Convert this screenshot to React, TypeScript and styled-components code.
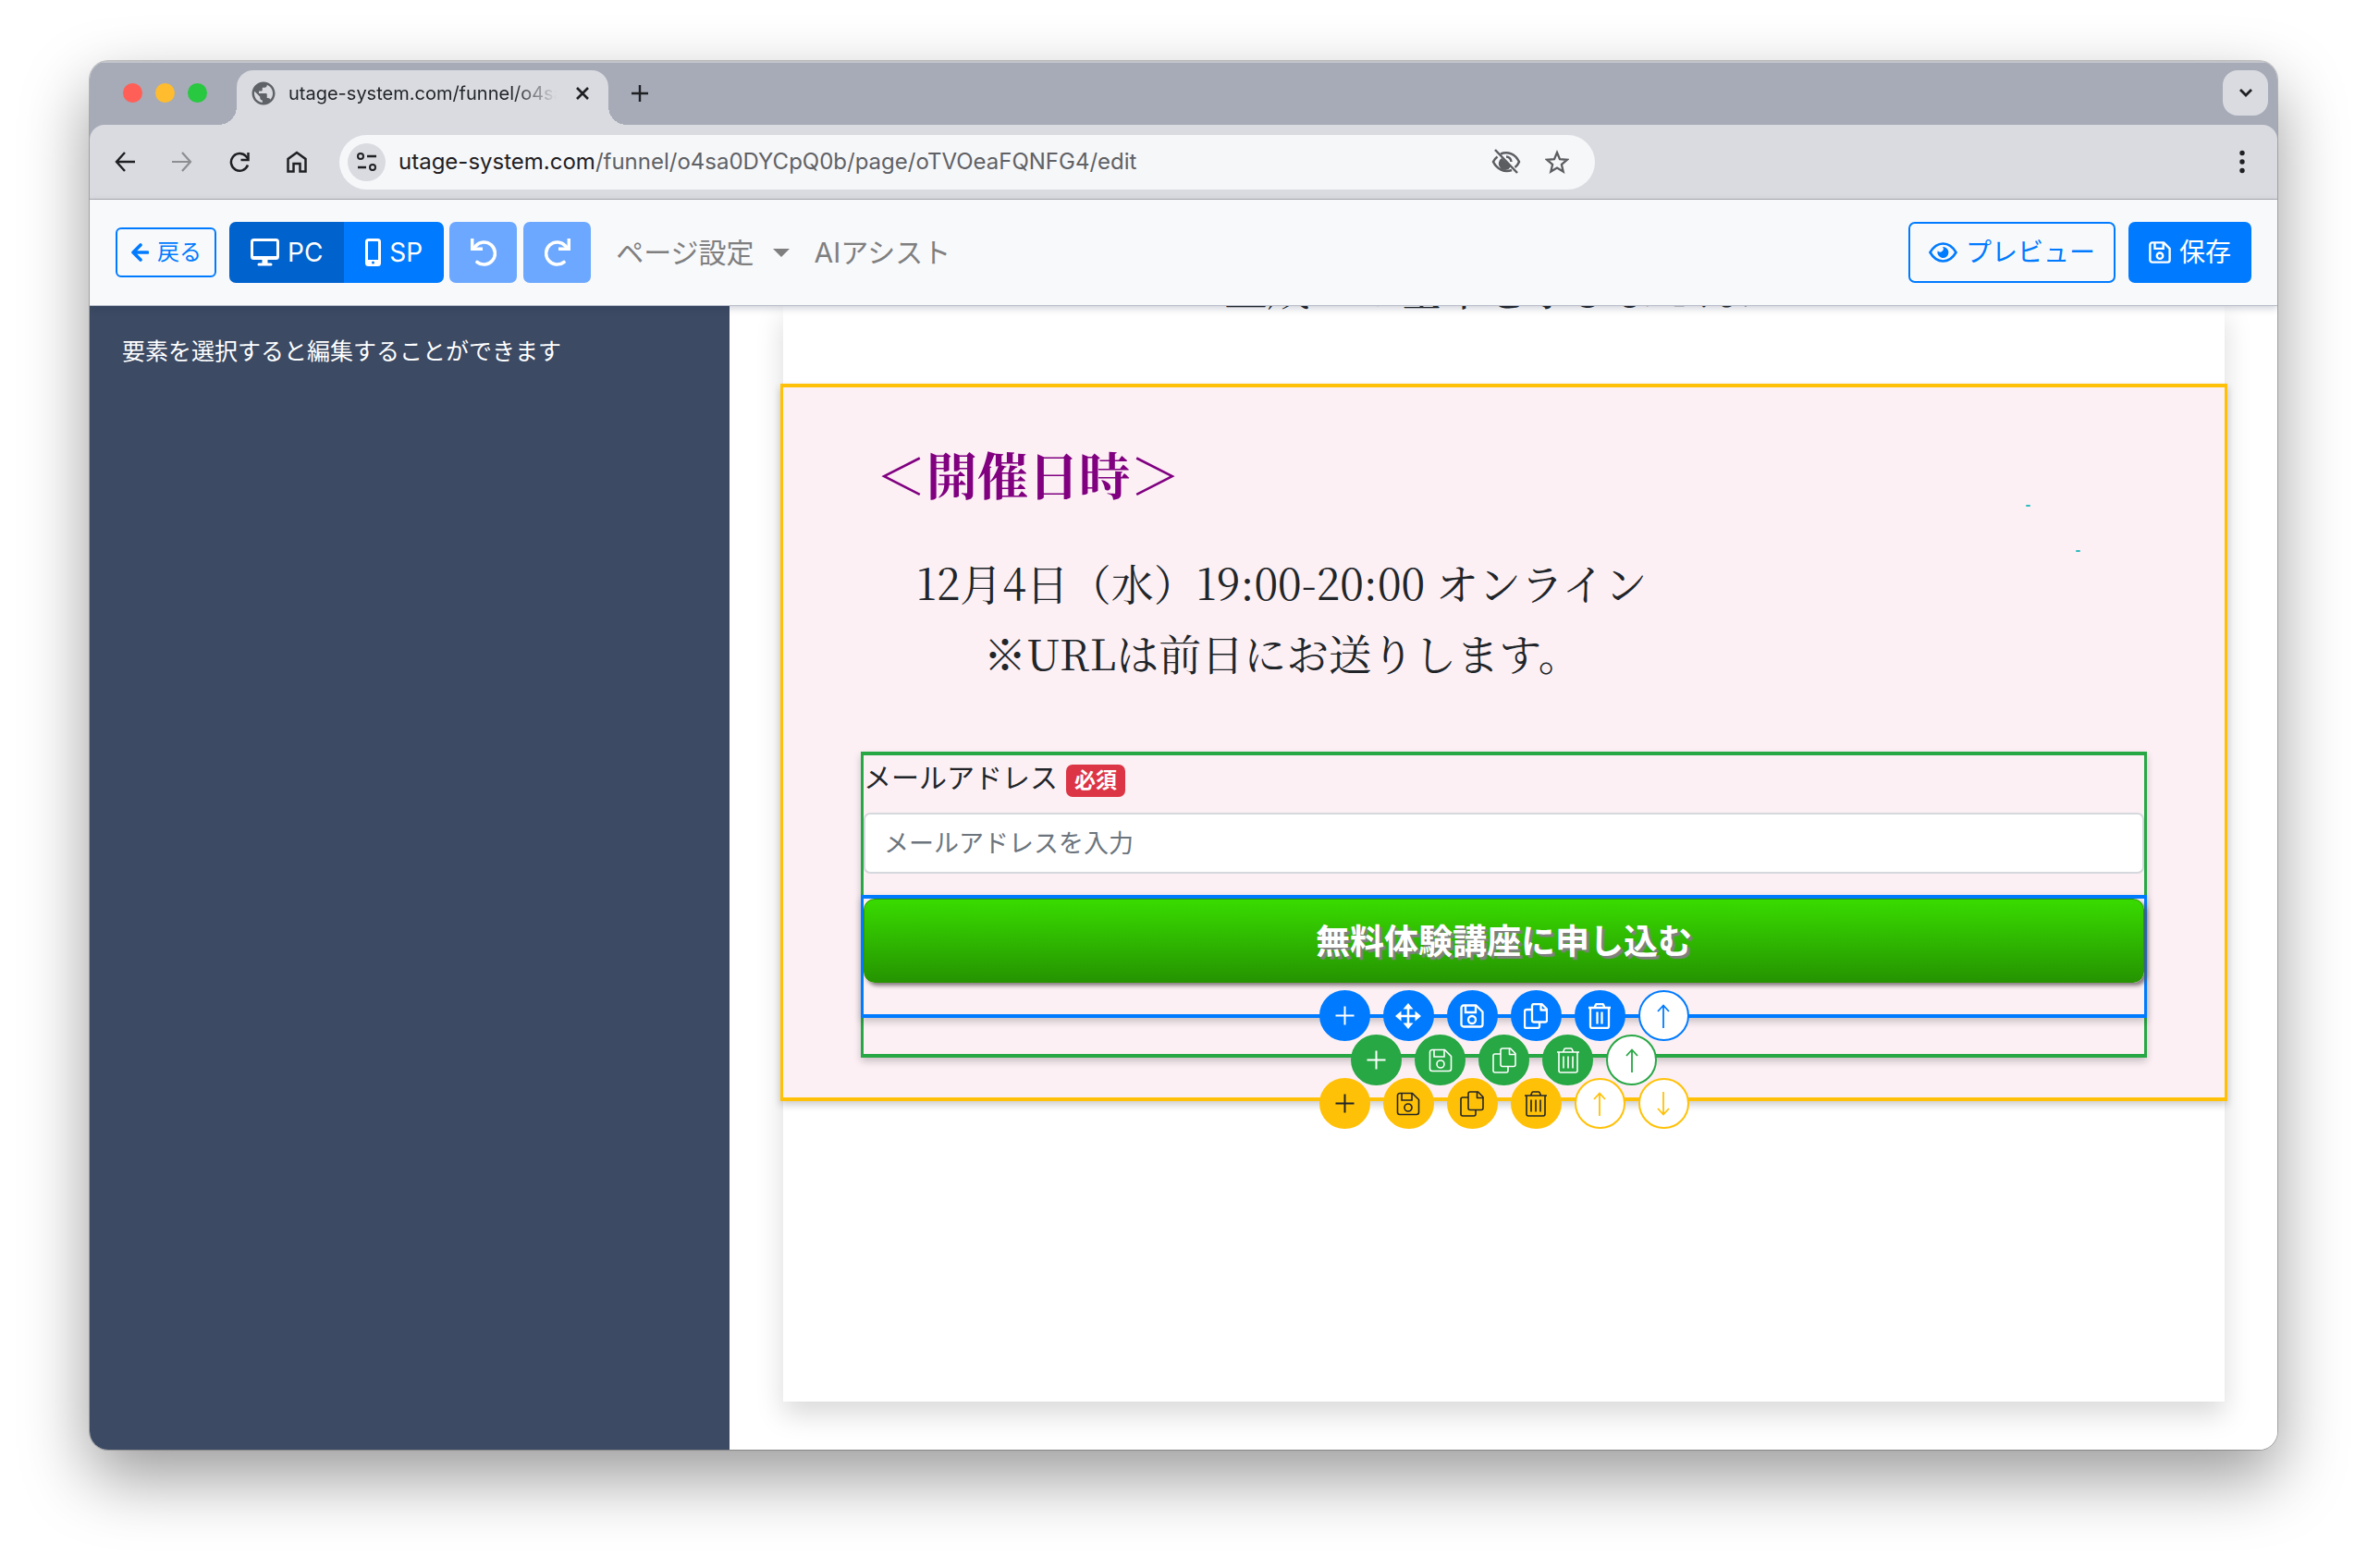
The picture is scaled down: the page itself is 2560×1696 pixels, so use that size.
import React from "react";
import styled, { createGlobalStyle, css } from "styled-components";
import { MdPublic } from "react-icons/md";

const sans = `Inter, "Noto Sans CJK JP", sans-serif`;
const serif = `"Noto Serif CJK JP", "Noto Serif JP", "Liberation Serif", "Noto Sans CJK JP", serif`;

const color = {
  primary: "#007bff",
  primaryDark: "#0062cc",
  primaryMuted: "#6ca8ff",
  success: "#28a745",
  warning: "#ffc107",
  danger: "#dc3545",
  dark: "#212529",
  chrome: "#dadbe0",
  tabs: "#a6abb7",
};

const GlobalStyle = createGlobalStyle`
  *, *::before, *::after { box-sizing: border-box; }
  body { margin: 0; background: #fff; font-family: ${sans}; color: ${color.dark}; }
  button { font-family: inherit; border: 0; padding: 0; margin: 0; background: none; color: inherit; cursor: pointer; }
  p, h2 { margin: 0; }
  svg { display: block; flex: none; }
`;

const Desktop = styled.div`
  min-height: 100vh;
  display: flex;
  padding: 66px 97px 128px;
  overflow: hidden;
`;

const Window = styled.div`
  flex: 1;
  min-width: 0;
  display: flex;
  flex-direction: column;
  border-radius: 20px;
  overflow: hidden;
  background: #fff;
  box-shadow: 0 0 0 1px rgba(0, 0, 0, 0.22), 0 30px 72px rgba(0, 0, 0, 0.4);
`;

/* ---------- browser chrome ---------- */

const TabStrip = styled.div`
  display: flex;
  align-items: center;
  height: 69px;
  padding: 0 10px 0 36px;
  background: ${color.tabs};
  box-shadow: inset 0 2px 0 #c3c5ca;
`;

const Lights = styled.div`
  display: flex;
  gap: 14px;
  margin-right: 32px;
`;

const Light = styled.button<{ $fill: string }>`
  width: 21px;
  height: 21px;
  border-radius: 50%;
  background: ${(p) => p.$fill};
`;

const Tab = styled.div`
  position: relative;
  align-self: flex-end;
  display: flex;
  align-items: center;
  width: 402px;
  height: 59px;
  padding: 0 16px 10px 14px;
  border-radius: 18px 18px 0 0;
  background: ${color.chrome};
  color: #5f6368;

  &::before,
  &::after {
    content: "";
    position: absolute;
    bottom: 0;
    width: 20px;
    height: 20px;
  }
  &::before {
    right: 100%;
    background: radial-gradient(circle at 0 0, transparent 20px, ${color.chrome} 20px);
  }
  &::after {
    left: 100%;
    background: radial-gradient(circle at 100% 0, transparent 20px, ${color.chrome} 20px);
  }
`;

const TabTitle = styled.span`
  flex: 1;
  margin: 0 16px 0 12px;
  overflow: hidden;
  white-space: nowrap;
  font-size: 20px;
  line-height: 28px;
  color: ${color.dark};
  mask-image: linear-gradient(to right, #000 84%, transparent);
`;

const ChromeButton = styled.button<{ $size: number }>`
  display: grid;
  place-items: center;
  width: ${(p) => p.$size}px;
  height: ${(p) => p.$size}px;
  color: #1f2023;
`;

const NewTab = styled(ChromeButton)`
  margin-left: 20px;
`;

const TabMenu = styled(ChromeButton)`
  margin-left: auto;
  border-radius: 16px;
  background: ${color.chrome};
`;

const ToolbarBack = styled.div`
  background: ${color.tabs};
`;

const Toolbar = styled.div`
  display: flex;
  align-items: center;
  gap: 22px;
  height: 81px;
  padding: 0 18px;
  border-bottom: 1px solid #a9abb0;
  border-radius: 16px 16px 0 0;
  background: ${color.chrome};
`;

const AddressBar = styled.div`
  flex: 1;
  display: flex;
  align-items: center;
  max-width: 1358px;
  height: 59px;
  margin-left: 4px;
  padding: 0 25px 0 9px;
  border-radius: 30px;
  background: #f6f7f9;
  color: #5f6165;
`;

const SiteInfo = styled(ChromeButton)`
  border-radius: 50%;
  background: ${color.chrome};
`;

const Url = styled.span`
  flex: 1;
  margin-left: 14px;
  font-size: 24px;
  line-height: 32px;
  white-space: nowrap;
`;

const Host = styled.span`
  color: #1f2023;
`;

const AddressButton = styled(ChromeButton)`
  margin-left: 23px;
  color: #5b5d61;
`;

const MoreButton = styled(ChromeButton)`
  margin-left: auto;
`;

/* ---------- editor navbar ---------- */

const Navbar = styled.nav`
  position: relative;
  z-index: 2;
  display: flex;
  align-items: center;
  height: 114px;
  padding: 0 28px;
  background: #f8f9fb;
  box-shadow: 0 1px 0 #b9bdc8, 0 3px 8px rgba(30, 40, 80, 0.24);
`;

const NavButton = styled.button<{ $variant?: "solid" | "outline" | "active" | "muted" }>`
  display: flex;
  align-items: center;
  justify-content: center;
  gap: 9px;
  height: 66px;
  padding: 0 20px;
  border: 2px solid ${color.primary};
  border-radius: 7px;
  background: ${color.primary};
  color: #fff;
  font-size: 28px;
  line-height: 42px;
  ${(p) => p.$variant === "outline" && css`background: transparent; color: ${color.primary};`}
  ${(p) => p.$variant === "active" && css`background: ${color.primaryDark}; border-color: ${color.primaryDark};`}
  ${(p) => p.$variant === "muted" && css`width: 73px; background: ${color.primaryMuted}; border-color: ${color.primaryMuted};`}
`;

const BackButton = styled(NavButton)`
  height: 54px;
  padding: 0 14px;
  border-radius: 6px;
  font-size: 24px;
  line-height: 36px;
`;

const DeviceButton = styled(NavButton)`
  padding: 0 21px;

  &:first-child { border-radius: 7px 0 0 7px; }
  &:last-child { border-radius: 0 7px 7px 0; }
`;

const DeviceGroup = styled.div`
  display: flex;
  margin: 0 6px 0 14px;
`;

const HistoryGroup = styled.div`
  display: flex;
  gap: 7px;
`;

const NavLink = styled.button`
  display: flex;
  align-items: center;
  gap: 20px;
  margin-left: 27px;
  color: #7f7f7f;
  font-size: 30px;
  line-height: 44px;
`;

const Caret = styled.span`
  border: 9px solid transparent;
  border-top-color: currentColor;
  border-bottom: 0;
`;

const NavEnd = styled.div`
  display: flex;
  gap: 14px;
  margin-left: auto;
`;

/* ---------- workspace ---------- */

const Workspace = styled.div`
  flex: 1;
  display: flex;
  min-height: 0;
`;

const Sidebar = styled.aside`
  width: 692px;
  padding: 31px 35px;
  background: #3c4a63;
  color: #fff;
  font-size: 25px;
  line-height: 38px;
`;

const Canvas = styled.main`
  flex: 1;
  min-width: 0;
  display: flex;
  padding: 0 57px 52px 58px;
  background: #fff;
`;

const Page = styled.article`
  flex: 1;
  min-width: 0;
  background: #fff;
  box-shadow: 0 14px 28px rgba(0, 0, 0, 0.15);
  font-family: ${serif};
`;

const Previous = styled.div`
  height: 85px;
  overflow: hidden;
`;

const PreviousText = styled.p`
  margin-top: -58px;
  font-size: 46px;
  line-height: 76px;
  font-weight: 500;
  text-align: center;
`;

const outline = css<{ $tone: string }>`
  border: solid ${(p) => p.$tone};
  border-width: 4px 3px;
  box-shadow: 0 4px 8px rgba(0, 0, 0, 0.2);
`;

const Section = styled.section<{ $tone: string }>`
  ${outline}
  position: relative;
  margin: 0 -3px;
  padding: 60px 84px 43px;
  background: #fcf0f4;
`;

const Title = styled.h2`
  padding-left: 16px;
  color: #800080;
  font-size: 55px;
  line-height: 66px;
  font-weight: 700;
`;

const Schedule = styled.div`
  margin: 46px 0 70px;
  padding-left: 60px;
  font-size: 46px;
  line-height: 76px;
`;

const Note = styled.p`
  padding-left: 73px;
`;

const Speck = styled.span<{ $x: number; $y: number }>`
  position: absolute;
  right: ${(p) => p.$x}px;
  top: ${(p) => p.$y}px;
  width: 5px;
  height: 2px;
  border-radius: 1px;
  background: #2fbcc0;
`;

const Form = styled.form<{ $tone: string }>`
  ${outline}
  position: relative;
  padding-bottom: 39px;
  font-family: ${sans};
`;

const FieldLabel = styled.label`
  display: flex;
  align-items: baseline;
  gap: 9px;
  height: 48px;
  margin-bottom: 14px;
  font-size: 30px;
  line-height: 48px;
`;

const Required = styled.span`
  padding: 0 9px;
  border-radius: 7px;
  background: ${color.danger};
  color: #fff;
  font-size: 23px;
  line-height: 35px;
  font-weight: 700;
`;

const EmailInput = styled.input`
  display: block;
  width: 100%;
  height: 66px;
  margin-bottom: 23px;
  padding: 0 20px;
  border: 2px solid #d5d8dc;
  border-radius: 7px;
  background: #fff;
  font-family: ${sans};
  font-size: 27px;

  &::placeholder { color: #6c757d; opacity: 1; }
`;

const ButtonElement = styled.div<{ $tone: string }>`
  ${outline}
  position: relative;
  margin: 0 -3px;
  padding-bottom: 34px;
`;

const SubmitButton = styled.button`
  display: block;
  width: 100%;
  height: 91px;
  padding-top: 3px;
  border: 1px solid #2d9305;
  border-radius: 12px;
  background: linear-gradient(#39db00, #259401);
  box-shadow: 3px 3px 4px rgba(90, 80, 85, 0.75);
  color: #fff;
  font-size: 37px;
  line-height: 54px;
  font-weight: 700;
  text-shadow: 3px 3px 1px #808080;
`;

/* Floating action bars sit over the lower edge of the element they belong to. */
const Actions = styled.div<{ $drop: number }>`
  position: absolute;
  z-index: 1;
  left: 0;
  right: 0;
  bottom: ${(p) => -p.$drop}px;
  display: flex;
  justify-content: center;
  gap: 14px;
`;

const Round = styled.button<{ $tone: string; $ink: string; $hollow: boolean }>`
  display: grid;
  place-items: center;
  width: 55px;
  height: 55px;
  border: 2px solid ${(p) => p.$tone};
  border-radius: 50%;
  background: ${(p) => (p.$hollow ? "#fff" : p.$tone)};
  color: ${(p) => (p.$hollow ? p.$tone : p.$ink)};
`;

/* ---------- icons ---------- */

type DrawProps = {
  w: number;
  h?: number;
  stroke?: number;
  box?: string;
  children: React.ReactNode;
};

const Draw = ({ w, h = w, stroke = 2, box, children }: DrawProps) => (
  <svg
    width={w}
    height={h}
    viewBox={box ?? `0 0 ${w} ${h}`}
    fill="none"
    stroke="currentColor"
    strokeWidth={stroke}
    aria-hidden="true"
  >
    {children}
  </svg>
);

const glyphs: Record<string, (s: number) => React.ReactNode> = {
  plus: () => (
    <Draw w={21} stroke={2}><path d="M10.500 .5v20M.5 10.500h20" /></Draw>
  ),
  move: () => (
    <Draw w={28} stroke={2.5}>
      <path d="M14 4v20M4 14h20" />
      <path fill="currentColor" stroke="none" d="M14 0l5.500 6.500h-11zM14 28l5.500-6.500h-11zM0 14l6.500-5.500v11zM28 14l-6.500-5.500v11z" />
    </Draw>
  ),
  save: (s) => (
    <Draw w={26} stroke={s}>
      <path strokeLinejoin="round" d="M4 1.500h13.500l7 7V22a2.500 2.500 0 0 1-2.500 2.500H4A2.500 2.500 0 0 1 1.500 22V4A2.500 2.500 0 0 1 4 1.500z" />
      <path d="M6 1.500V9h11V1.500" />
      <circle cx="13" cy="17" r="4" />
    </Draw>
  ),
  copy: (s) => (
    <Draw w={26} h={28} stroke={s}>
      <path strokeLinejoin="round" d="M11 1h8.500l5.500 5.500v12a2 2 0 0 1-2 2H11a2 2 0 0 1-2-2V3a2 2 0 0 1 2-2zM18.500 1v6.500H25" />
      <path d="M9 7H3a2 2 0 0 0-2 2v16a2 2 0 0 0 2 2h12a2 2 0 0 0 2-2v-4.500" />
    </Draw>
  ),
  trash: (s) => (
    <Draw w={26} h={28} stroke={s}>
      <path strokeLinejoin="round" d="M1 5h24M7.500 5L9 1.500q.4-.5 1-.5h6q.6 0 1 .5L18.500 5M3 5v20a2 2 0 0 0 2 2h16a2 2 0 0 0 2-2V5" />
      <path d={s > 2 ? "M10.500 9.500v13M15.500 9.500v13" : "M8 9.500v13M13 9.500v13M18 9.500v13"} />
    </Draw>
  ),
  up: () => (
    <Draw w={14} h={26} stroke={1.8}><path d="M7 26V1.500M1 8l6-6.500L13 8" /></Draw>
  ),
  down: () => (
    <Draw w={14} h={26} stroke={1.8}><path d="M7 0v24.500M1 18l6 6.500L13 18" /></Draw>
  ),
};

const labels: Record<string, string> = {
  plus: "追加",
  move: "移動",
  save: "保存",
  copy: "複製",
  trash: "削除",
  up: "上へ",
  down: "下へ",
};

type ActionBarProps = { tone: string; ink?: string; stroke?: number; drop: number; items: string[] };

const ActionBar = ({ tone, ink = "#fff", stroke = 1.6, drop, items }: ActionBarProps) => (
  <Actions $drop={drop}>
    {items.map((name) => (
      <Round
        key={name}
        type="button"
        aria-label={labels[name]}
        $tone={tone}
        $ink={ink}
        $hollow={name === "up" || name === "down"}
      >
        {glyphs[name](stroke)}
      </Round>
    ))}
  </Actions>
);

const BrowserChrome = () => (
  <>
    <TabStrip>
      <Lights>
        <Light $fill="#ff5f57" aria-label="閉じる" />
        <Light $fill="#febc2e" aria-label="しまう" />
        <Light $fill="#28c840" aria-label="拡大" />
      </Lights>
      <Tab>
        <MdPublic size={30} />
        <TabTitle>utage-system.com/funnel/o4sa0DYCpQ0b</TabTitle>
        <ChromeButton $size={24} aria-label="タブを閉じる">
          <Draw w={14} stroke={2.6}><path d="M1 1l12 12M13 1L1 13" /></Draw>
        </ChromeButton>
      </Tab>
      <NewTab $size={28} aria-label="新しいタブ">
        <Draw w={18} stroke={2.4}><path d="M9 0v18M0 9h18" /></Draw>
      </NewTab>
      <TabMenu $size={49} aria-label="タブを検索">
        <Draw w={14} h={9} stroke={2.8}><path d="M1 1l6 6 6-6" /></Draw>
      </TabMenu>
    </TabStrip>
    <ToolbarBack>
      <Toolbar>
        <ChromeButton $size={40} aria-label="戻る">
          <Draw w={22} stroke={2.4}><path d="M22 11H2M11 1L2 11l9 10" /></Draw>
        </ChromeButton>
        <ChromeButton $size={40} aria-label="進む">
          <Draw w={22} stroke={2.2}><path stroke="#8c8e92" d="M0 11h20M11 1l9 10-9 10" /></Draw>
        </ChromeButton>
        <ChromeButton $size={40} aria-label="再読み込み">
          <Draw w={22} stroke={2.5}>
            <path d="M20 14.500A9.300 9.300 0 1 1 18 5l2.500 3" />
            <path d="M20.500 1v8H12.500" />
          </Draw>
        </ChromeButton>
        <ChromeButton $size={40} aria-label="ホーム">
          <Draw w={22} h={24} stroke={2.5}>
            <path d="M1.500 22.500V9L11 2l9.500 7v13.500h-6V14h-7v8.500z" />
          </Draw>
        </ChromeButton>
        <AddressBar>
          <SiteInfo $size={41} aria-label="サイト情報">
            <Draw w={22} h={20} stroke={2}>
              <circle cx="4" cy="4" r="3" />
              <path strokeWidth="2.400" d="M11 4h10M1 16h9" />
              <circle cx="17" cy="16" r="3" />
            </Draw>
          </SiteInfo>
          <Url>
            <Host>utage-system.com</Host>/funnel/o4sa0DYCpQ0b/page/oTVOeaFQNFG4/edit
          </Url>
          <AddressButton $size={32} aria-label="表示設定">
            <Draw w={32} h={28} stroke={2.5}>
              <path d="M10 5.500C18 2 26 6 30 14c-1 2.500-2.500 4.500-4.500 6M22 23C14 26 6 22 2 14c1-2 2.500-4 4.500-5.500" />
              <path d="M16 8.500a5.500 5.500 0 0 1 5.500 5.500" />
              <path fill="currentColor" stroke="none" d="M11 10l10 9a7 7 0 1 1-10-9z" />
              <path d="M4 1l24 25" />
            </Draw>
          </AddressButton>
          <AddressButton $size={32} aria-label="ブックマーク">
            <Draw w={26}>
              <path strokeWidth="2.300" d="M13 3l3 7.200 7.800.6-5.900 5.100 1.800 7.600L13 19.500l-6.700 4 1.800-7.600-5.900-5.100 7.800-.6z" />
            </Draw>
          </AddressButton>
        </AddressBar>
        <MoreButton $size={40} aria-label="メニュー">
          <Draw w={6} h={26}>
            <g fill="currentColor" stroke="none">
              <circle cx="3" cy="3.500" r="2.700" />
              <circle cx="3" cy="13" r="2.700" />
              <circle cx="3" cy="22.500" r="2.700" />
            </g>
          </Draw>
        </MoreButton>
      </Toolbar>
    </ToolbarBack>
  </>
);

const EditorNav = () => (
  <Navbar>
    <BackButton $variant="outline">
      <Draw w={20} stroke={3.6}><path strokeLinecap="round" strokeLinejoin="round" d="M18.500 10H3M11 2L3 10l8 8" /></Draw>
      戻る
    </BackButton>
    <DeviceGroup>
      <DeviceButton $variant="active">
        <Draw w={31} h={30} stroke={3}>
          <rect x="1.500" y="1.500" width="28" height="20" rx="2" />
          <path d="M1.500 20.500h28" />
          <path strokeWidth="6" d="M15.500 22v5" />
          <path strokeLinecap="round" d="M9 28h13" />
        </Draw>
        PC
      </DeviceButton>
      <DeviceButton>
        <Draw w={17} h={30} stroke={3}>
          <rect x="1.500" y="1.500" width="14" height="27" rx="2" />
          <path fill="currentColor" stroke="none" d="M2 23h13v5H2z" />
          <circle cx="8.500" cy="26" r="1.500" fill={color.primary} stroke="none" />
        </Draw>
        SP
      </DeviceButton>
    </DeviceGroup>
    <HistoryGroup>
      <NavButton $variant="muted" aria-label="元に戻す">
        <Draw w={28} h={30} stroke={3.6}>
          <path strokeLinecap="round" d="M7 25.500A12 12 0 1 0 5.500 8l-2 2.500" />
          <path strokeWidth="3.500" d="M1.700 0v11.300h11.300" />
        </Draw>
      </NavButton>
      <NavButton $variant="muted" aria-label="やり直す">
        <Draw w={28} h={30} stroke={3.6}>
          <path strokeLinecap="round" d="M21 25.500A12 12 0 1 1 22.500 8l2 2.500" />
          <path strokeWidth="3.500" d="M26.300 0v11.300H15" />
        </Draw>
      </NavButton>
    </HistoryGroup>
    <NavLink aria-haspopup="menu">
      ページ設定
      <Caret />
    </NavLink>
    <NavLink>AIアシスト</NavLink>
    <NavEnd>
      <NavButton $variant="outline">
        <Draw w={31} h={22} stroke={2.6}>
          <path d="M1.500 11C5 5 10 1.500 15.500 1.500S26 5 29.500 11C26 17 21 20.500 15.500 20.500S5 17 1.500 11z" />
          <path fill="currentColor" stroke="none" d="M15 5a6 6 0 1 1-5.300 4.200 3 3 0 0 0 5.300-4.200z" />
        </Draw>
        プレビュー
      </NavButton>
      <NavButton>
        <Draw w={24} stroke={2.6} box="0 0 26 26">
          <path strokeLinejoin="round" d="M4 1.500h13.500l7 7V22a2.500 2.500 0 0 1-2.500 2.500H4A2.500 2.500 0 0 1 1.500 22V4A2.500 2.500 0 0 1 4 1.500z" />
          <path d="M7 1.500V8.500h10V1.500" />
          <circle cx="13" cy="17" r="3.500" />
        </Draw>
        保存
      </NavButton>
    </NavEnd>
  </Navbar>
);

export default function App() {
  return (
    <>
      <GlobalStyle />
      <Desktop>
        <Window>
          <BrowserChrome />
          <EditorNav />
          <Workspace>
            <Sidebar>要素を選択すると編集することができます</Sidebar>
            <Canvas>
              <Page>
                <Previous>
                  <PreviousText>生成AIの基本を学びませんか</PreviousText>
                </Previous>
                <Section $tone={color.warning}>
                  <Title>＜開催日時＞</Title>
                  <Schedule>
                    <p>12月4日（水）19:00-20:00 オンライン</p>
                    <Note>※URLは前日にお送りします。</Note>
                  </Schedule>
                  <Speck $x={210} $y={127} />
                  <Speck $x={156} $y={176} />
                  <Form $tone={color.success} onSubmit={(e) => e.preventDefault()}>
                    <FieldLabel htmlFor="email">
                      メールアドレス
                      <Required>必須</Required>
                    </FieldLabel>
                    <EmailInput id="email" type="email" placeholder="メールアドレスを入力" />
                    <ButtonElement $tone={color.primary}>
                      <SubmitButton type="submit">無料体験講座に申し込む</SubmitButton>
                      <ActionBar
                        tone={color.primary}
                        stroke={2.3}
                        drop={29}
                        items={["plus", "move", "save", "copy", "trash", "up"]}
                      />
                    </ButtonElement>
                    <ActionBar
                      tone={color.success}
                      drop={34}
                      items={["plus", "save", "copy", "trash", "up"]}
                    />
                  </Form>
                  <ActionBar
                    tone={color.warning}
                    ink={color.dark}
                    drop={34}
                    items={["plus", "save", "copy", "trash", "up", "down"]}
                  />
                </Section>
              </Page>
            </Canvas>
          </Workspace>
        </Window>
      </Desktop>
    </>
  );
}
